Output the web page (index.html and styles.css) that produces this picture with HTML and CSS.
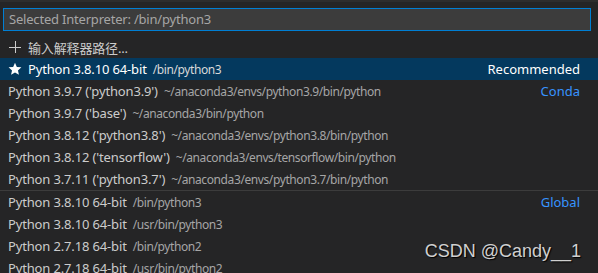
FILE: index.html
```html
<!DOCTYPE html>
<html lang="en">
<head>
    <meta charset="UTF-8">
    <title>Select Interpreter</title>
    <link rel="stylesheet" href="styles.css">
</head>
<body>
    <div class="picker">
        <div class="input-wrap">
            <div class="input">Selected Interpreter: /bin/python3</div>
        </div>
        <div class="list">
            <div class="row">
                <span class="icon">
                    <svg width="14" height="14" viewBox="0 0 14 14"><path d="M1 7.5h12M7.5 1v12" stroke="#cccccc" stroke-width="1" fill="none"/></svg>
                </span>
                <span class="label">输入解释器路径...</span>
            </div>
            <div class="row selected">
                <span class="icon">
                    <svg width="14" height="14" viewBox="0 0 16 16"><path d="M8 0.8l2.1 4.8 5.2.5-3.9 3.5 1.1 5.1L8 12.1l-4.5 2.6 1.1-5.1L.7 6.1l5.2-.5z" fill="#ffffff"/></svg>
                </span>
                <span class="label">Python 3.8.10 64-bit</span>
                <span class="desc">/bin/python3</span>
                <span class="tag">Recommended</span>
            </div>
            <div class="row">
                <span class="label">Python 3.9.7 ('python3.9')</span>
                <span class="desc">~/anaconda3/envs/python3.9/bin/python</span>
                <span class="tag link">Conda</span>
            </div>
            <div class="row">
                <span class="label">Python 3.9.7 ('base')</span>
                <span class="desc">~/anaconda3/bin/python</span>
            </div>
            <div class="row">
                <span class="label">Python 3.8.12 ('python3.8')</span>
                <span class="desc">~/anaconda3/envs/python3.8/bin/python</span>
            </div>
            <div class="row">
                <span class="label">Python 3.8.12 ('tensorflow')</span>
                <span class="desc">~/anaconda3/envs/tensorflow/bin/python</span>
            </div>
            <div class="row">
                <span class="label">Python 3.7.11 ('python3.7')</span>
                <span class="desc">~/anaconda3/envs/python3.7/bin/python</span>
            </div>
            <div class="row group">
                <span class="label">Python 3.8.10 64-bit</span>
                <span class="desc">/bin/python3</span>
                <span class="tag link">Global</span>
            </div>
            <div class="row">
                <span class="label">Python 3.8.10 64-bit</span>
                <span class="desc">/usr/bin/python3</span>
            </div>
            <div class="row">
                <span class="label">Python 2.7.18 64-bit</span>
                <span class="desc">/bin/python2</span>
            </div>
            <div class="row">
                <span class="label">Python 2.7.18 64-bit</span>
                <span class="desc">/usr/bin/python2</span>
            </div>
        </div>
        <div class="watermark">CSDN @Candy__1</div>
    </div>
</body>
</html>
```

FILE: styles.css
```css
body {
    margin: 0;
    background-color: #252526;
    font-family: "Noto Sans", "Noto Sans CJK SC", sans-serif;
    font-size: 13px;
    color: #cccccc;
    overflow: hidden;
}

.picker {
    position: relative;
    height: 273px;
    border-top: 2px solid #2d2d2d;
    box-sizing: border-box;
}

.input-wrap {
    padding: 6px 7px 0 3px;
}

.input {
    height: 21px;
    line-height: 21px;
    padding-left: 5px;
    background-color: #3c3c3c;
    border: 1px solid #007fd4;
    color: #a6a6a6;
    letter-spacing: -0.2px;
}

.list {
    margin-top: 5px;
}

.row {
    display: flex;
    align-items: center;
    height: 22px;
    padding: 0 18px 0 8px;
    white-space: nowrap;
}

.label {
    letter-spacing: -0.15px;
}

.row.selected {
    background-color: #04395e;
    color: #ffffff;
}

.row.group {
    border-top: 1px solid #3c3c3c;
}

.icon {
    display: flex;
    width: 20px;
    align-items: center;
}

.desc {
    margin-left: 6px;
    font-size: 12px;
    letter-spacing: -0.4px;
    color: #a6a6a6;
}

.selected .desc {
    color: #d8d8d8;
}

.tag {
    margin-left: auto;
}

.tag.link {
    color: #3794ff;
}

.watermark {
    position: absolute;
    right: 17px;
    top: 239px;
    font-family: "Liberation Sans", Arial, sans-serif;
    font-size: 18px;
    color: #d0d0d0;
    text-shadow: 1px 1px 1px #000000;
}
```
